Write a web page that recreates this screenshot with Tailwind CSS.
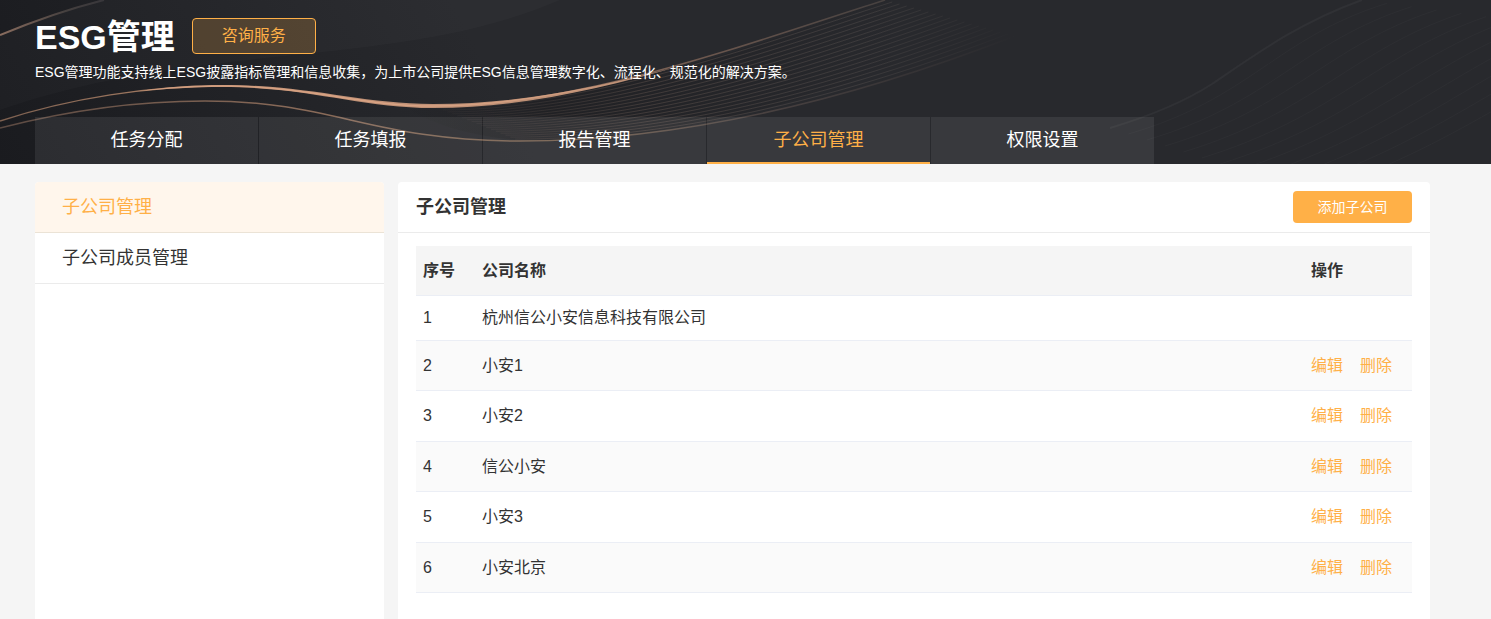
<!DOCTYPE html>
<html lang="zh-CN">
<head>
  <meta charset="UTF-8" />
  <meta name="viewport" content="width=device-width, initial-scale=1.0"/>
  <title>ESG管理 – 子公司管理</title>
  <script src="https://cdn.jsdelivr.net/npm/@tailwindcss/browser@4"></script>
</head>
<body class="min-h-screen flex flex-col bg-[#f5f5f5] text-[#333] font-['Liberation_Sans','Noto_Sans_CJK_SC',sans-serif]">

  <!-- HEADER -->
  <header class="relative overflow-hidden bg-[#28292d] pl-[35px] pr-[61px] pt-[18px] text-white">
    <svg class="absolute left-0 top-0" width="1920" height="164" viewBox="0 0 1920 164" fill="none" aria-hidden="true">
      <defs>
        <linearGradient id="shade" x1="0" y1="164" x2="420" y2="-60" gradientUnits="userSpaceOnUse">
          <stop offset="0" stop-color="#1a1b1f"/>
          <stop offset="0.5" stop-color="#212226"/>
          <stop offset="1" stop-color="#28292d"/>
        </linearGradient>
        <linearGradient id="corner" x1="0" y1="0" x2="110" y2="0" gradientUnits="userSpaceOnUse">
          <stop offset="0" stop-color="#8a6d5f"/>
          <stop offset="0.6" stop-color="#45403f"/>
          <stop offset="1" stop-color="#36353a"/>
        </linearGradient>
        <linearGradient id="gold" x1="0" y1="0" x2="890" y2="0" gradientUnits="userSpaceOnUse">
          <stop offset="0" stop-color="#7d6050"/>
          <stop offset="0.25" stop-color="#b08468"/>
          <stop offset="0.42" stop-color="#d9a384"/>
          <stop offset="0.62" stop-color="#a07a66"/>
          <stop offset="0.8" stop-color="#6a564d"/>
          <stop offset="1" stop-color="#45403f"/>
        </linearGradient>
        <linearGradient id="thin" x1="0" y1="0" x2="1015" y2="0" gradientUnits="userSpaceOnUse">
          <stop offset="0" stop-color="#5c4a42"/>
          <stop offset="0.3" stop-color="#8a6b59"/>
          <stop offset="0.55" stop-color="#75604f"/>
          <stop offset="0.75" stop-color="#4a4241"/>
          <stop offset="1" stop-color="#28292d"/>
        </linearGradient>
        <linearGradient id="mesh" x1="400" y1="0" x2="1015" y2="0" gradientUnits="userSpaceOnUse">
          <stop offset="0" stop-color="#9a7f70" stop-opacity="0"/>
          <stop offset="0.4" stop-color="#9a7f70" stop-opacity="0.25"/>
          <stop offset="0.75" stop-color="#9a8a80" stop-opacity="0.18"/>
          <stop offset="1" stop-color="#9a8a80" stop-opacity="0"/>
        </linearGradient>
        <linearGradient id="fan" x1="400" y1="0" x2="900" y2="0" gradientUnits="userSpaceOnUse">
          <stop offset="0" stop-color="#1d1d20" stop-opacity="0"/>
          <stop offset="0.3" stop-color="#1d1d20" stop-opacity="0.7"/>
          <stop offset="1" stop-color="#1d1d20" stop-opacity="0"/>
        </linearGradient>
      </defs>
      <path fill="url(#shade)" d="M0 0H700V164H0Z"/>
      <path fill="#ffffff" fill-opacity="0.02" d="M0 35C36 21 70 8 104 0H560C400 70 200 40 0 110Z"/>
      <path fill="url(#fan)" d="M400 104C560 115 740 52 885 0H1015C900 80 700 140 540 141C480 140 430 125 400 104Z"/>
      <g id="meshLines" stroke="url(#mesh)"></g>
      <path stroke="url(#corner)" stroke-width="2" d="M0 35C34 21 68 9 104 0"/>
      <path stroke="url(#thin)" stroke-width="1.5" d="M0 128C70 110 140 101 205 101C335 101 370 141 520 141C690 141 860 96 1015 36"/>
      <path stroke="url(#gold)" stroke-width="1.5" d="M0 121C70 98 150 86 222 86C310 86 360 106 433 106C580 106 740 46 885 0"/>
      <path fill="#d9a384" fill-opacity="0.85" d="M140 91C165 87 195 85 222 85C310 85 360 104 433 104C520 104 600 87 680 66C600 89 520 108 433 108C360 108 310 87 222 87C195 87 165 89 140 91Z"/>
      <g id="waveLines" stroke="#ffffff" stroke-opacity="0.025"></g>
      <path stroke="#ffffff" stroke-opacity="0.04" stroke-width="2" d="M1110 128C1150 116 1184 102 1212 84C1256 54 1300 22 1362 0"/>
    </svg>

    <div class="relative">
      <div class="flex items-center h-9 gap-[17px]">
        <h1 class="text-[34px] leading-10 pt-0.5 font-bold">ESG管理</h1>
        <button type="button" class="w-[124px] h-9 rounded border border-[#ffb047] bg-[#ffb047]/20 text-base leading-5 text-[#ffb047] cursor-pointer">咨询服务</button>
      </div>
      <p class="mt-2 text-sm leading-5 whitespace-nowrap">ESG管理功能支持线上ESG披露指标管理和信息收集，为上市公司提供ESG信息管理数字化、流程化、规范化的解决方案。</p>

      <!-- TABS -->
      <nav class="mt-[35px] flex gap-px text-lg text-center">
        <a href="#" class="w-[223px] h-[47px] leading-[46px] bg-white/8 hover:text-[#ffb047]">任务分配</a>
        <a href="#" class="w-[223px] h-[47px] leading-[46px] bg-white/8 hover:text-[#ffb047]">任务填报</a>
        <a href="#" class="w-[223px] h-[47px] leading-[46px] bg-white/8 hover:text-[#ffb047]">报告管理</a>
        <a href="#" class="w-[223px] h-[47px] leading-[46px] bg-white/8 border-b-2 border-[#ffb047] text-[#ffb047]">子公司管理</a>
        <a href="#" class="w-[223px] h-[47px] leading-[46px] bg-white/8 hover:text-[#ffb047]">权限设置</a>
      </nav>
    </div>
  </header>

  <!-- MAIN CONTENT -->
  <div class="flex-1 flex gap-3.5 pl-[35px] pr-[61px] pt-[18px]">

    <!-- Sidebar -->
    <aside class="w-[349px] shrink-0 bg-white rounded-t overflow-hidden text-lg">
      <a href="#" class="block h-[51px] px-[27px] leading-[50px] border-b border-[#ebe3d6] bg-[#fff6ec] text-[#ffb047]">子公司管理</a>
      <a href="#" class="block h-[51px] px-[27px] leading-[50px] border-b border-[#ebebeb] hover:text-[#ffb047]">子公司成员管理</a>
    </aside>

    <main class="flex-1 bg-white rounded-t">
      <div class="flex items-center justify-between h-[51px] px-[18px] border-b border-[#ebebeb]">
        <h2 class="text-lg font-bold">子公司管理</h2>
        <button type="button" class="w-[119px] h-8 rounded bg-[#ffb047] text-sm text-white cursor-pointer">添加子公司</button>
      </div>

      <!-- Company table -->
      <div class="px-[18px] pt-[13px] pb-[26px]">
        <table class="w-full table-fixed border-separate border-spacing-0 text-base leading-5 text-left [&_td]:border-b [&_td]:border-[#ebeef5] [&_th]:border-b [&_th]:border-[#ebeef5] [&_td]:px-[7px] [&_th]:px-[7px]">
          <thead>
            <tr class="h-[50px] bg-[#f5f5f5]">
              <th class="w-[59px]">序号</th>
              <th>公司名称</th>
              <th class="w-[108px]">操作</th>
            </tr>
          </thead>
          <tbody>
            <tr class="h-[45px]">
              <td>1</td>
              <td>杭州信公小安信息科技有限公司</td>
              <td></td>
            </tr>
            <tr class="h-[50px] bg-[#fafafa]">
              <td>2</td>
              <td>小安1</td>
              <td><div class="flex gap-[17px] text-[#ffb047]"><a href="#">编辑</a><a href="#">删除</a></div></td>
            </tr>
            <tr class="h-[51px]">
              <td>3</td>
              <td>小安2</td>
              <td><div class="flex gap-[17px] text-[#ffb047]"><a href="#">编辑</a><a href="#">删除</a></div></td>
            </tr>
            <tr class="h-[50px] bg-[#fafafa]">
              <td>4</td>
              <td>信公小安</td>
              <td><div class="flex gap-[17px] text-[#ffb047]"><a href="#">编辑</a><a href="#">删除</a></div></td>
            </tr>
            <tr class="h-[51px]">
              <td>5</td>
              <td>小安3</td>
              <td><div class="flex gap-[17px] text-[#ffb047]"><a href="#">编辑</a><a href="#">删除</a></div></td>
            </tr>
            <tr class="h-[50px] bg-[#fafafa]">
              <td>6</td>
              <td>小安北京</td>
              <td><div class="flex gap-[17px] text-[#ffb047]"><a href="#">编辑</a><a href="#">删除</a></div></td>
            </tr>
          </tbody>
        </table>
      </div>
    </main>
  </div>

  <script>
    const SVG_NS = "http://www.w3.org/2000/svg";

    function addLine(group, p) {
      const path = document.createElementNS(SVG_NS, "path");
      path.setAttribute("d", `M${p[0]} ${p[1]}C${p.slice(2).join(" ")}`);
      document.getElementById(group).appendChild(path);
    }

    // blend from one curve to the other
    function addLines(group, from, to, count) {
      for (let i = 1; i < count; i++) {
        addLine(group, from.map((v, k) => v + (to[k] - v) * i / count));
      }
    }

    addLines("meshLines", [433, 106, 580, 106, 740, 46, 885, 0], [520, 141, 690, 141, 860, 96, 1015, 36], 18);
    addLines("waveLines", [1110, 128, 1230, 94, 1250, 34, 1362, 0], [1330, 200, 1480, 150, 1560, 80, 1660, 40], 12);
  </script>

</body>
</html>
